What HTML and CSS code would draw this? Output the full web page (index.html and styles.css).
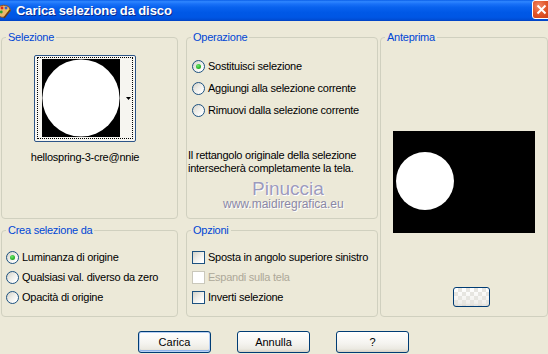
FILE: index.html
```html
<!DOCTYPE html>
<html lang="it">
<head>
<meta charset="utf-8">
<title>Carica selezione da disco</title>
<link rel="stylesheet" href="styles.css">
</head>
<body>
<div class="window">
  <div class="titlebar">
    <svg class="app-icon" width="14" height="15" viewBox="0 0 14 15">
      <path d="M1 3 C4 0 11 1 12 5 C13 9 9 9 8 11 C7 14 2 14 1 11 C0 8 -1 5 1 3 Z" fill="#e9b66a" stroke="#8a4f1c" stroke-width="1"/>
      <circle cx="4" cy="4" r="1.4" fill="#d8261c"/>
      <circle cx="8" cy="4" r="1.4" fill="#2c62d6"/>
      <circle cx="3.3" cy="8" r="1.4" fill="#2fa02f"/>
      <circle cx="10" cy="7" r="1.2" fill="#f4e13a"/>
      <path d="M6 14 L12 6" stroke="#6b3b12" stroke-width="1.6"/>
    </svg>
    <span class="title">Carica selezione da disco</span>
    <span class="close">
      <svg width="11" height="11" viewBox="0 0 11 11"><path d="M1.5 1.5 L9.5 9.5 M9.5 1.5 L1.5 9.5" stroke="#fff" stroke-width="2"/></svg>
    </span>
  </div>

  <div class="panels">
    <fieldset class="group col1">
      <legend>Selezione</legend>
      <div class="thumbwrap">
        <div class="thumb">
          <div class="focus">
            <svg class="thumb-img" width="78" height="78" viewBox="0 0 78 78">
              <rect width="78" height="78" fill="#000"/>
              <circle cx="39" cy="39" r="38.6" fill="#fff"/>
            </svg>
            <svg class="drop" width="5" height="3" viewBox="0 0 5 3"><path d="M0 0 H5 L2.5 3 Z" fill="#000"/></svg>
          </div>
        </div>
        <div class="thumb-name">hellospring-3-cre@nnie</div>
      </div>
    </fieldset>

    <fieldset class="group">
      <legend>Operazione</legend>
      <div class="choices op">
        <div class="choice"><span class="radio on"></span><span>Sostituisci selezione</span></div>
        <div class="choice"><span class="radio"></span><span>Aggiungi alla selezione corrente</span></div>
        <div class="choice"><span class="radio"></span><span>Rimuovi dalla selezione corrente</span></div>
      </div>
      <p class="info">Il rettangolo originale della selezione<br>intersecherà completamente la tela.</p>
    </fieldset>

    <fieldset class="group preview">
      <legend>Anteprima</legend>
      <svg class="preview-img" width="142" height="102" viewBox="0 0 142 102">
        <rect width="142" height="102" fill="#000"/>
        <circle cx="32" cy="50" r="29" fill="#fff"/>
      </svg>
      <span class="mini-btn"></span>
    </fieldset>

    <fieldset class="group col1">
      <legend>Crea selezione da</legend>
      <div class="choices low crea">
        <div class="choice"><span class="radio on"></span><span>Luminanza di origine</span></div>
        <div class="choice"><span class="radio"></span><span>Qualsiasi val. diverso da zero</span></div>
        <div class="choice"><span class="radio"></span><span>Opacità di origine</span></div>
      </div>
    </fieldset>

    <fieldset class="group">
      <legend>Opzioni</legend>
      <div class="choices low op">
        <div class="choice"><span class="check"></span><span>Sposta in angolo superiore sinistro</span></div>
        <div class="choice disabled"><span class="check"></span><span>Espandi sulla tela</span></div>
        <div class="choice"><span class="check"></span><span>Inverti selezione</span></div>
      </div>
    </fieldset>
  </div>

  <div class="buttons">
    <button class="btn default">Carica</button>
    <button class="btn">Annulla</button>
    <button class="btn">?</button>
  </div>

  <div class="watermark">
    <span class="wm-name">Pinuccia</span>
    <span class="wm-site">www.maidiregrafica.eu</span>
  </div>
</div>
</body>
</html>
```

FILE: styles.css
```css
html, body {
  margin: 0;
  padding: 0;
  background: #ece9d8;
}

.window {
  position: relative;
  width: 548px;
  height: 354px;
  overflow: hidden;
  background: #ece9d8;
  font-family: "Liberation Sans", Arial, sans-serif;
  font-size: 11px;
  letter-spacing: -0.25px;
  color: #000;
}

/* ---------- title bar ---------- */
.titlebar {
  height: 21px;
  display: flex;
  align-items: center;
  background: linear-gradient(to bottom,
    #0a5fe8 0%, #2f86ff 8%, #1a72f8 18%, #0862ee 35%,
    #0058e6 60%, #0056e4 82%, #004fd8 92%, #0041c2 100%);
}

.app-icon {
  flex: none;
  margin-left: -2px;
  margin-top: 1px;
}

.title {
  margin-left: 4px;
  font-weight: bold;
  font-size: 13px;
  color: #fff;
  text-shadow: 1px 1px 0 #0b2a8c;
  white-space: nowrap;
  letter-spacing: -0.1px;
}

.close {
  margin-left: auto;
  margin-right: -3px;
  align-self: flex-start;
  width: 19px;
  height: 19px;
  box-sizing: border-box;
  border: 1px solid #fff;
  border-radius: 3px;
  background: radial-gradient(circle at 35% 30%, #f28a6a 0%, #e2582d 45%, #c73a12 100%);
  display: flex;
  align-items: center;
  justify-content: center;
}

/* ---------- panels ---------- */
.panels {
  display: grid;
  grid-template-columns: 183px 192px 168px;
  grid-template-rows: 188px 93px;
  column-gap: 2px;
  row-gap: 5px;
  padding: 10px 0 0 1px;
}

.group {
  margin: 0;
  padding: 0;
  min-width: 0;
  border: 1px solid #d0d0bf;
  border-radius: 4px;
}

.group legend {
  margin-left: 4px;
  padding: 0 2px;
  line-height: 13px;
  color: #0046d5;
}

.col1 {
  margin-right: 6px;
}

.preview {
  grid-column: 3;
  grid-row: 1 / span 2;
}

/* selection thumbnail */
.thumbwrap {
  width: 102px;
  margin: 11px 0 0 32px;
  display: flex;
  flex-direction: column;
  align-items: center;
}

.thumb {
  width: 102px;
  height: 87px;
  box-sizing: border-box;
  border: 1px solid #2c5487;
  border-radius: 2px;
  background: #f6f5f0;
  padding: 1px 2px 2px 2px;
}

.focus {
  height: 100%;
  box-sizing: border-box;
  border: 1px dotted #000;
  padding-left: 4px;
  display: flex;
  align-items: center;
}

.thumb-img {
  display: block;
  flex: none;
}

.drop {
  display: block;
  margin-left: auto;
  margin-right: 1px;
}

.thumb-name {
  margin-top: 9px;
  line-height: 13px;
  white-space: nowrap;
}

/* radio & check rows */
.choices {
  display: flex;
  flex-direction: column;
  gap: 9px;
  padding-top: 16px;
}

.choices.low {
  gap: 7px;
  padding-top: 14px;
}

.choices.op { padding-left: 5px; }
.choices.crea { padding-left: 4px; }

.choice {
  display: flex;
  align-items: center;
  gap: 3px;
  line-height: 13px;
  white-space: nowrap;
}

.choice.disabled { color: #aca899; }

.radio {
  flex: none;
  width: 13px;
  height: 13px;
  box-sizing: border-box;
  border: 1px solid #1c5180;
  border-radius: 50%;
  background: linear-gradient(135deg, #d4d2c8 0%, #eeede8 45%, #ffffff 85%);
  display: flex;
  align-items: center;
  justify-content: center;
}

.radio.on::after {
  content: "";
  width: 5px;
  height: 5px;
  border-radius: 50%;
  background: radial-gradient(circle at 40% 35%, #6fe86f 0%, #2db82d 55%, #1a8c1a 100%);
}

.check {
  flex: none;
  width: 13px;
  height: 13px;
  box-sizing: border-box;
  border: 1px solid #1c5180;
  background: linear-gradient(135deg, #d4d2c8 0%, #eeede8 45%, #ffffff 85%);
}

.choice.disabled .check {
  border-color: #cac8bb;
  background: #fff;
}

.info {
  margin: 32px 0 0 1px;
  line-height: 13px;
  white-space: nowrap;
}

/* preview */
.preview-img {
  display: block;
  margin: 87px 0 0 12px;
}

.mini-btn {
  display: block;
  width: 37px;
  height: 20px;
  box-sizing: border-box;
  margin: 54px 0 0 72px;
  border: 1px solid #003c74;
  border-radius: 3px;
  background:
    linear-gradient(45deg, #e6e5e0 25%, transparent 25%, transparent 75%, #e6e5e0 75%),
    linear-gradient(45deg, #e6e5e0 25%, transparent 25%, transparent 75%, #e6e5e0 75%),
    linear-gradient(#ffffff, #f1f0ec 85%, #d8d4cc);
  background-size: 8px 8px, 8px 8px, 100% 100%;
  background-position: 0 0, 4px 4px, 0 0;
}

/* ---------- dialog buttons ---------- */
.buttons {
  display: flex;
  gap: 26px;
  padding-left: 138px;
  margin-top: 14px;
}

.btn {
  width: 73px;
  height: 22px;
  box-sizing: border-box;
  padding: 0;
  border: 1px solid #003c74;
  border-radius: 3px;
  background: linear-gradient(#ffffff 0%, #f5f4f0 55%, #ebe9e1 85%, #d6d0c5 100%);
  font-family: "Liberation Sans", Arial, sans-serif;
  font-size: 11px;
  color: #000;
  line-height: 20px;
}

.btn.default {
  box-shadow: inset 0 0 0 1px #b8d0f4, inset 0 -1px 0 1px #8fb3ea;
}

/* ---------- watermark overlay ---------- */
.watermark {
  position: absolute;
  inset: 0;
  pointer-events: none;
  letter-spacing: 0;
}

.wm-name {
  position: absolute;
  left: 252px;
  top: 178px;
  font-size: 19px;
  line-height: 22px;
  color: #9c9abc;
  text-shadow: 0 0 1px #fff, 1px 1px 0 #fff;
}

.wm-site {
  position: absolute;
  left: 223px;
  top: 198px;
  font-size: 12px;
  line-height: 13px;
  color: #8a88a6;
  text-shadow: 1px 1px 0 #fff;
}
```
